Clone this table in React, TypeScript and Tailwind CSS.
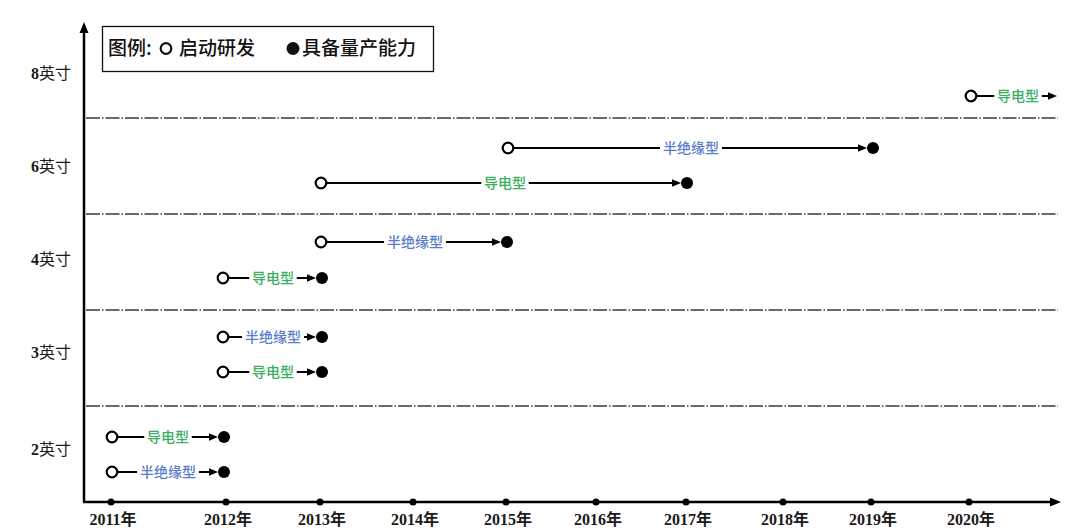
import React from "react";

const GREEN = "#3aaf5f";
const BLUE = "#5a7ccc";

type Row = { y: number; x1: number; x2: number; label: string; cx: number; end: boolean };

const rows: Row[] = [
  { y: 96, x1: 971, x2: 1057, label: "导电型", cx: 1018, end: false },
  { y: 148, x1: 508, x2: 873, label: "半绝缘型", cx: 691, end: true },
  { y: 183, x1: 321, x2: 687, label: "导电型", cx: 505, end: true },
  { y: 242, x1: 321, x2: 507, label: "半绝缘型", cx: 415, end: true },
  { y: 278, x1: 223, x2: 322, label: "导电型", cx: 273, end: true },
  { y: 337, x1: 223, x2: 322, label: "半绝缘型", cx: 273, end: true },
  { y: 372, x1: 223, x2: 322, label: "导电型", cx: 273, end: true },
  { y: 437, x1: 112, x2: 224, label: "导电型", cx: 168, end: true },
  { y: 472, x1: 112, x2: 224, label: "半绝缘型", cx: 168, end: true },
];

const years = [
  [111, "2011年"],
  [226, "2012年"],
  [320, "2013年"],
  [413, "2014年"],
  [506, "2015年"],
  [596, "2016年"],
  [686, "2017年"],
  [783, "2018年"],
  [871, "2019年"],
  [969, "2020年"],
] as const;

const sizes = [
  [73, "8"],
  [166, "6"],
  [259, "4"],
  [352, "3"],
  [449, "2"],
] as const;

const dashYs = [118, 214, 310, 406];

const sans = '"Noto Sans CJK SC", "Noto Sans", sans-serif';
const serif = '"Liberation Serif", "Noto Sans CJK SC", serif';

export default function App() {
  return (
    <div className="w-[1077px] h-[530px] bg-white overflow-hidden">
      <svg width="1077" height="530" viewBox="0 0 1077 530" className="block">
        {dashYs.map((y) => (
          <line
            key={y}
            x1={86}
            x2={1058}
            y1={y}
            y2={y}
            stroke="#3a3a3a"
            strokeWidth={1.3}
            strokeDasharray="14 2 1.5 2"
          />
        ))}

        <line x1={84} y1={30} x2={84} y2={502} stroke="#000" strokeWidth={2.5} />
        <polygon points="84,22 79.5,33 88.5,33" fill="#000" />
        <line x1={83} y1={502} x2={1052} y2={502} stroke="#000" strokeWidth={2.5} />
        <polygon points="1061,502 1050,497.5 1050,506.5" fill="#000" />

        {years.map(([x, t]) => (
          <g key={t}>
            <circle cx={x} cy={502} r={3.5} fill="#000" />
            <text
              x={x + 2}
              y={525}
              textAnchor="middle"
              fontFamily={serif}
              fontWeight={700}
              fontSize={16}
              fill="#1a1a1a"
            >
              {t}
            </text>
          </g>
        ))}

        {sizes.map(([y, n]) => (
          <text
            key={n}
            x={71}
            y={y + 5.5}
            textAnchor="end"
            fontFamily={serif}
            fontSize={16}
            fill="#1a1a1a"
          >
            <tspan fontWeight={700}>{n}</tspan>英寸
          </text>
        ))}

        <rect x={102.5} y={26.5} width={331} height={45} fill="#fff" stroke="#111" strokeWidth={1.3} />
        <text x={108} y={55} fontFamily={sans} fontWeight={500} fontSize={19} fill="#111">
          图例:
        </text>
        <circle cx={166} cy={48.5} r={5.3} fill="#fff" stroke="#111" strokeWidth={2.2} />
        <text x={179} y={55} fontFamily={sans} fontWeight={500} fontSize={19} fill="#111">
          启动研发
        </text>
        <circle cx={293} cy={48.5} r={6.5} fill="#111" />
        <text x={302} y={55} fontFamily={sans} fontWeight={500} fontSize={19} fill="#111">
          具备量产能力
        </text>

        {rows.map((r, i) => {
          const w = r.label.length * 14.5 + 4;
          const tip = r.end ? r.x2 - 6 : r.x2;
          const color = r.label === "导电型" ? GREEN : BLUE;
          return (
            <g key={i}>
              <line x1={r.x1} y1={r.y} x2={tip - 4} y2={r.y} stroke="#000" strokeWidth={2} />
              <polygon
                points={`${tip},${r.y} ${tip - 9},${r.y - 3.8} ${tip - 9},${r.y + 3.8}`}
                fill="#000"
              />
              <rect x={r.cx - w / 2} y={r.y - 9} width={w} height={18} fill="#fff" />
              <text
                x={r.cx}
                y={r.y + 5}
                textAnchor="middle"
                fontFamily={sans}
                fontWeight={500}
                fontSize={14}
                fill={color}
              >
                {r.label}
              </text>
              <circle cx={r.x1} cy={r.y} r={5.3} fill="#fff" stroke="#000" strokeWidth={2.2} />
              {r.end && <circle cx={r.x2} cy={r.y} r={6} fill="#000" />}
            </g>
          );
        })}
      </svg>
    </div>
  );
}
